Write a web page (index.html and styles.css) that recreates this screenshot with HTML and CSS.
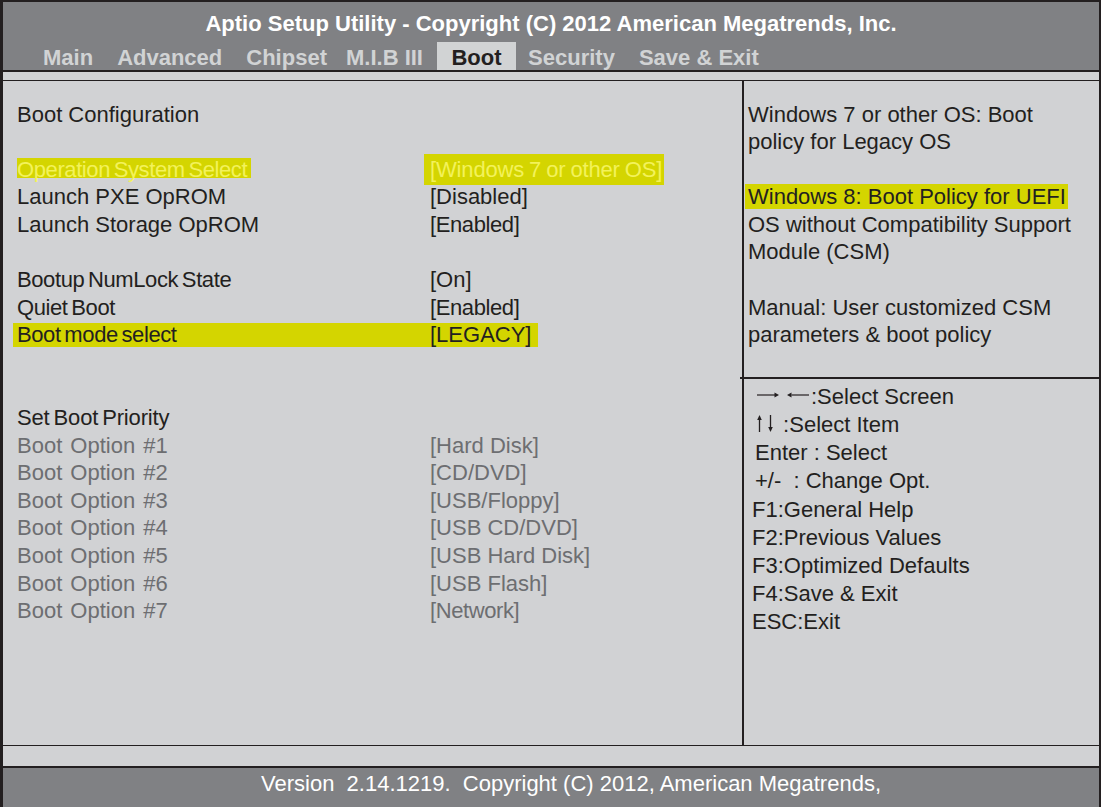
FILE: index.html
```html
<!DOCTYPE html>
<html lang="en">
<head>
<meta charset="utf-8">
<title>Aptio Setup Utility - Boot</title>
<link rel="stylesheet" href="styles.css">
</head>
<body>
<div class="screen">
  <header class="top">
    <div class="title">Aptio Setup Utility - Copyright (C) 2012 American Megatrends, Inc.</div>
    <nav class="tabs">
      <span class="tab">Main</span>
      <span class="tab">Advanced</span>
      <span class="tab">Chipset</span>
      <span class="tab mib">M.I.B III</span>
      <span class="tab active">Boot</span>
      <span class="tab">Security</span>
      <span class="tab">Save &amp; Exit</span>
    </nav>
  </header>
  <div class="strip-top"></div>
  <main class="body">
    <section class="settings">
      <div class="row"><span>Boot Configuration</span><span></span></div>
      <div class="row"></div>
      <div class="row"><span><span class="sel-label tight">Operation System Select&nbsp;</span></span><span><span class="sel-value">[Windows 7 or other OS]</span></span></div>
      <div class="row"><span>Launch PXE OpROM</span><span>[Disabled]</span></div>
      <div class="row"><span>Launch Storage OpROM</span><span class="tight">[Enabled]</span></div>
      <div class="row"></div>
      <div class="row"><span class="tight">Bootup NumLock State</span><span>[On]</span></div>
      <div class="row"><span class="tight">Quiet Boot</span><span class="tight">[Enabled]</span></div>
      <div class="row hl"><span class="tight">Boot mode select</span><span>[LEGACY]</span></div>
      <div class="row"></div>
      <div class="row"></div>
      <div class="row"><span class="snug">Set Boot Priority</span><span></span></div>
      <div class="row dim"><span class="opt">Boot Option #1</span><span>[Hard Disk]</span></div>
      <div class="row dim"><span class="opt">Boot Option #2</span><span>[CD/DVD]</span></div>
      <div class="row dim"><span class="opt">Boot Option #3</span><span>[USB/Floppy]</span></div>
      <div class="row dim"><span class="opt">Boot Option #4</span><span>[USB CD/DVD]</span></div>
      <div class="row dim"><span class="opt">Boot Option #5</span><span>[USB Hard Disk]</span></div>
      <div class="row dim"><span class="opt">Boot Option #6</span><span>[USB Flash]</span></div>
      <div class="row dim"><span class="opt">Boot Option #7</span><span class="tight">[Network]</span></div>
    </section>
    <aside class="side">
      <div class="help-text">
        <p>Windows 7 or other OS: Boot<br>policy for Legacy OS</p>
        <p><span class="hi">Windows 8: Boot Policy for UEFI</span><br>OS without Compatibility Support<br>Module (CSM)</p>
        <p>Manual: User customized CSM<br>parameters &amp; boot policy</p>
      </div>
      <div class="keys">
        <div class="k arrow"><svg class="lr" width="54" height="12" viewBox="0 0 54 12"><path d="M0 6H18" stroke="#231f20" stroke-width="1.2"/><path d="M17.5 3.6L22 6L17.5 8.4Z" fill="#231f20"/><path d="M34.5 6H52" stroke="#231f20" stroke-width="1.2"/><path d="M34.5 3.6L30 6L34.5 8.4Z" fill="#231f20"/></svg>:Select Screen</div>
        <div class="k arrow"><svg class="ud" width="20" height="17" viewBox="0 0 20 17"><path d="M2.5 4V17" stroke="#231f20" stroke-width="1.3"/><path d="M0.2 5L2.5 0L4.8 5Z" fill="#231f20"/><path d="M13.5 0V13" stroke="#231f20" stroke-width="1.3"/><path d="M11.2 12L13.5 17L15.8 12Z" fill="#231f20"/></svg> :Select Item</div>
        <div class="k ind">Enter : Select</div>
        <div class="k ind">+/-&nbsp; : Change Opt.</div>
        <div class="k">F1:General Help</div>
        <div class="k">F2:Previous Values</div>
        <div class="k">F3:Optimized Defaults</div>
        <div class="k">F4:Save &amp; Exit</div>
        <div class="k">ESC:Exit</div>
      </div>
    </aside>
  </main>
  <div class="strip-bottom"></div>
  <footer class="foot">
    <p>Version&nbsp; 2.14.1219.&nbsp; Copyright (C) 2012, American Megatrends,</p>
  </footer>
</div>
</body>
</html>
```

FILE: styles.css
```css
html, body {
  margin: 0;
  padding: 0;
}

body {
  background: #d1d2d4;
  font-family: "Liberation Sans", Arial, sans-serif;
  font-size: 22px;
  color: #231f20;
}

.screen {
  width: 1101px;
  height: 807px;
  box-sizing: border-box;
  border-top: 2px solid #231f20;
  border-left: 3px solid #231f20;
  border-right: 2px solid #231f20;
  display: flex;
  flex-direction: column;
  overflow: hidden;
}

/* header */
.top {
  height: 70px;
  box-sizing: border-box;
  padding-top: 8px;
  background: #808184;
  border-bottom: 2px solid #231f20;
}

.title {
  color: #ffffff;
  font-weight: bold;
  text-align: center;
  line-height: 28px;
  white-space: nowrap;
}

.tabs {
  display: flex;
  margin-top: 4px;
  padding-left: 28px;
  height: 28px;
}

.tab {
  padding: 3px 12px 0;
  line-height: 25px;
  font-weight: bold;
  color: #d1d3d4;
  white-space: nowrap;
}

.tab.mib {
  padding-left: 7px;
  padding-right: 14px;
}

.tab.active {
  background: #d1d3d4;
  color: #231f20;
  padding: 3px 14.5px 0;
}

.strip-top {
  height: 8px;
  border-bottom: 1px solid #231f20;
}

/* main body */
.body {
  display: flex;
  height: 664px;
  border-bottom: 1px solid #231f20;
}

.settings {
  width: 739px;
  box-sizing: border-box;
  padding: 19.5px 0 0 14px;
}

.row {
  display: grid;
  grid-template-columns: 413px auto;
  height: 27.6px;
  line-height: 27.6px;
  white-space: nowrap;
}

.row.dim {
  color: #6d6e71;
}

.opt {
  word-spacing: 2px;
}

.row.hl {
  width: 525px;
  box-sizing: border-box;
  margin-left: -4px;
  padding-left: 4px;
  grid-template-columns: 413px auto;
  background: linear-gradient(to bottom, transparent 2px, #d4d500 2px, #d4d500 26px, transparent 26px);
}

.tight {
  letter-spacing: -0.4px;
  word-spacing: -2px;
}

.snug {
  letter-spacing: -0.15px;
  word-spacing: -2px;
}

.sel-label {
  color: #f3f25a;
  background: linear-gradient(to bottom, transparent 1px, #d4d500 1px, #d4d500 21px, transparent 21px);
}

.sel-value {
  color: #f3f25a;
  background: #d4d500;
  letter-spacing: -0.15px;
  word-spacing: -1px;
  padding: 2.5px 2px 3.5px 6px;
  margin-left: -6px;
}

/* right side */
.side {
  flex: 1;
  border-left: 2px solid #231f20;
  display: flex;
  flex-direction: column;
}

.help-text {
  height: 296px;
  box-sizing: border-box;
  padding: 19.5px 0 0 4px;
  line-height: 27.6px;
}

.help-text p {
  margin: 0 0 27.6px;
  white-space: nowrap;
}

.hi {
  background: #d4d500;
  padding: 0 2px 0 3px;
  margin-left: -3px;
}

.keys {
  margin-left: -4px;
  border-top: 2px solid #231f20;
  padding: 4.2px 0 0 12px;
}

.k {
  line-height: 28.1px;
  white-space: nowrap;
}

.k.arrow {
  padding-left: 5px;
}

.k.ind {
  padding-left: 3px;
}

.k .lr {
  vertical-align: 3px;
}

.k .ud {
  vertical-align: baseline;
}

.strip-bottom {
  height: 20px;
  border-bottom: 2px solid #231f20;
}

/* footer */
.foot {
  flex: 1;
  background: #808184;
  color: #ffffff;
  overflow: hidden;
  padding: 2px 0 0 258px;
}

.foot p {
  margin: 0;
  line-height: 27.6px;
  white-space: nowrap;
}
```
